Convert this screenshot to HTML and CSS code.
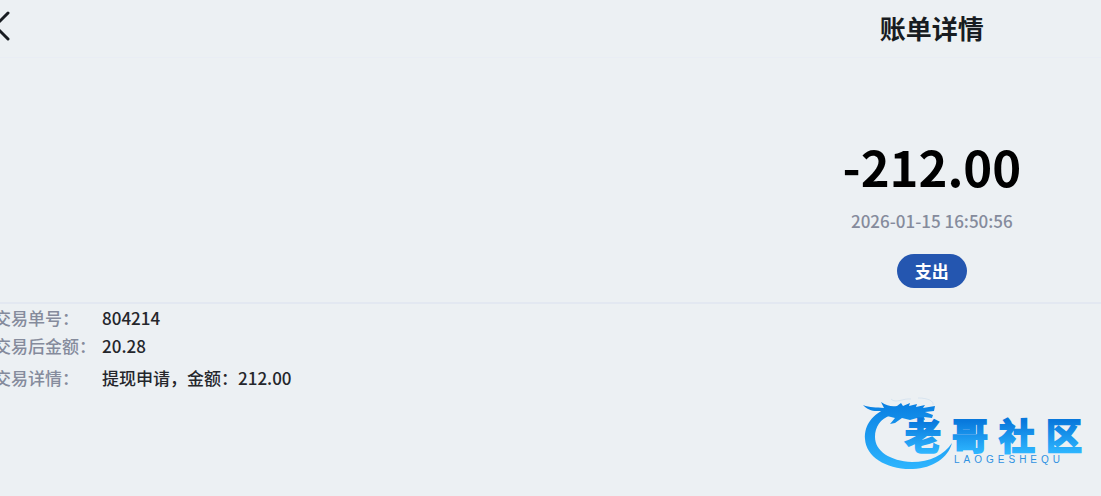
FILE: index.html
```html
<!DOCTYPE html>
<html lang="zh-CN">
<head>
    <meta charset="UTF-8">
    <meta name="viewport" content="width=device-width, initial-scale=1.0">
    <title>账单详情</title>
    <link rel="stylesheet" href="styles.css">
</head>
<body>
    <div class="page">
        <header class="navbar">
            <button class="back-btn" type="button" aria-label="返回">
                <svg width="20" height="32" viewBox="0 0 20 32" fill="none" stroke="currentColor" stroke-width="3" stroke-linecap="round" stroke-linejoin="round">
                    <path d="M16 3L3 16L16 29"/>
                </svg>
            </button>
            <h1>账单详情</h1>
        </header>

        <main>
            <section class="summary">
                <p class="amount">-212.00</p>
                <time class="date" datetime="2026-01-15T16:50:56">2026-01-15 16:50:56</time>
                <span class="tag">支出</span>
            </section>

            <dl class="details">
                <div class="row">
                    <dt>交易单号：</dt>
                    <dd>804214</dd>
                </div>
                <div class="row">
                    <dt>交易后金额：</dt>
                    <dd>20.28</dd>
                </div>
                <div class="row last">
                    <dt>交易详情：</dt>
                    <dd>提现申请，金额：212.00</dd>
                </div>
            </dl>
        </main>
    </div>

    <svg class="logo" width="228" height="78" viewBox="0 0 228 78" role="img" aria-label="老哥社区">
        <defs>
            <linearGradient id="dragonFill" gradientUnits="userSpaceOnUse" x1="0" y1="8" x2="0" y2="74">
                <stop offset="0" stop-color="#0a80e2"/>
                <stop offset="1" stop-color="#2eb6ff"/>
            </linearGradient>
            <linearGradient id="nameFill" gradientUnits="userSpaceOnUse" x1="0" y1="25" x2="0" y2="57">
                <stop offset="0" stop-color="#0878dc"/>
                <stop offset="1" stop-color="#2eb6ff"/>
            </linearGradient>
        </defs>
        <!-- dragon body -->
        <path fill="url(#dragonFill)" d="M27 12C13 18 4 29 5 43C6 61 27 74 53 73C73 72 88 62 92 47C84 59 70 66 52 66C30 65 15 55 15 41C15 31 20 23 31 19Z"/>
        <!-- dragon head, horns and whiskers -->
        <path fill="url(#dragonFill)" d="M3 9C10 12 16 11 24 12L21 6C27 10 32 11 37 10L41 7L43 10L50 7L49 10L57 8L56 11L65 9L63 12L75 10L74 15L65 16L73 19L72 22L64 21L65 24L57 22L50 24L42 22L35 27L30 28L35 22L27 20L20 21L25 15L17 15C11 15 7 13 3 9Z"/>
        <path fill="none" stroke="#b9d3e8" stroke-width="1" opacity="0.4" d="M31 3C36 8 43 2 51 3M58 2C68 2 74 5 73 9"/>
        <g class="logo-name" fill="url(#nameFill)" stroke="url(#nameFill)">
            <text x="45" y="54">老</text>
            <text x="92" y="54">哥</text>
            <text x="139" y="54">社</text>
            <text x="186" y="54">区</text>
        </g>
        <text class="logo-sub" x="94" y="67">LAOGESHEQU</text>
    </svg>
</body>
</html>
```
FILE: styles.css
```css
* {
    box-sizing: border-box;
}

body {
    margin: 0;
    min-height: 100vh;
    position: relative;
    overflow: hidden;
    background: #ecf0f3;
    color: #24262b;
    font-family: "Noto Sans CJK SC", sans-serif;
    font-size: 17px;
    font-weight: 500;
    line-height: 28px;
}

/* The sheet is wider than the window and bleeds off both sides */
.page {
    width: 170vw;
    margin-left: -4px;
}

.navbar {
    display: grid;
    grid-template-columns: 20px 1fr 20px;
    align-items: start;
    height: 58px;
    padding-top: 10px;
    border-bottom: 1px solid #e9edf4;
}

.navbar h1 {
    margin: 0;
    text-align: center;
    font-size: 26px;
    font-weight: bold;
    line-height: 36px;
    color: #181c21;
}

.back-btn {
    display: block;
    margin: 0 0 0 -4px;
    padding: 0;
    border: none;
    background: none;
    color: #181c21;
    cursor: pointer;
}

.back-btn svg {
    display: block;
}

/* Amount */
.summary {
    display: flex;
    flex-direction: column;
    align-items: center;
    padding: 74px 0 14px;
    border-bottom: 2px solid #e3e8f1;
}

.amount {
    margin: 0;
    font-size: 49px;
    font-weight: bold;
    line-height: 68px;
    color: #000;
}

.date {
    margin-top: 7px;
    color: #858b9c;
}

.tag {
    margin-top: 19px;
    padding: 0 18px;
    border-radius: 17px;
    background: #2456b0;
    color: #fff;
    font-weight: bold;
    line-height: 34px;
}

/* Details */
.details {
    margin: 0;
}

.row {
    display: flex;
    margin-left: -2px;
}

.row dt {
    width: 108px;
    color: #858b9c;
}

.row dd {
    margin: 0;
}

.last {
    margin-top: 4px;
}

/* Floating watermark */
.logo {
    position: absolute;
    right: 13px;
    bottom: 22px;
}

.logo-name {
    font-size: 36px;
    font-weight: bold;
    stroke-width: 2px;
}

.logo-sub {
    font-family: "Liberation Sans", sans-serif;
    font-size: 10px;
    letter-spacing: 4px;
    fill: #2f92e2;
}
```
